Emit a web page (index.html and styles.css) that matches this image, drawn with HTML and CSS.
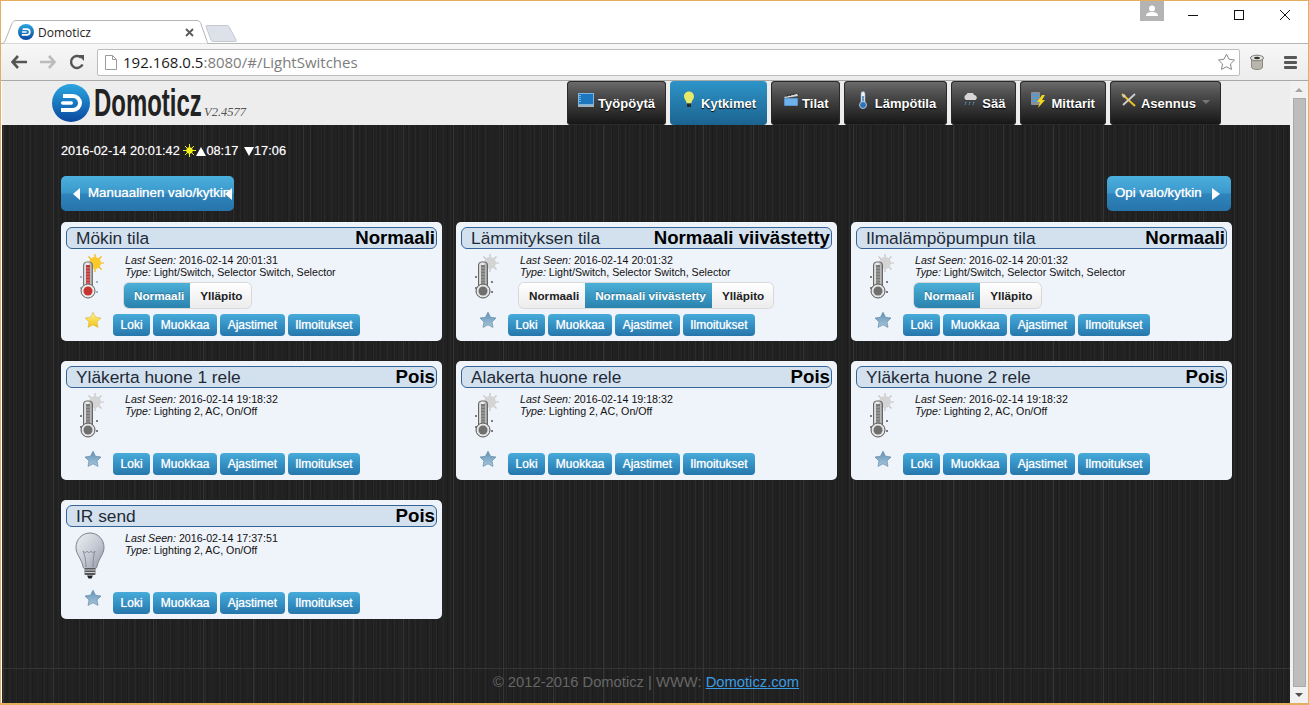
FILE: index.html
```html
<!DOCTYPE html>
<html lang="fi">
<head>
<meta charset="utf-8">
<title>Domoticz</title>
<link rel="stylesheet" href="styles.css">
</head>
<body>
<svg class="defs" width="0" height="0" aria-hidden="true">
  <defs>
    <linearGradient id="blueBall" x1="0" y1="0" x2="0" y2="1"><stop offset="0" stop-color="#2aa7e0"/><stop offset="1" stop-color="#0a48a0"/></linearGradient>
    <linearGradient id="tubeRed" x1="0" y1="0" x2="1" y2="0"><stop offset="0" stop-color="#c9c9c9"/><stop offset=".5" stop-color="#f4f4f4"/><stop offset="1" stop-color="#8a8a8a"/></linearGradient>
    <linearGradient id="glass" x1="0" y1="0" x2="1" y2="1"><stop offset="0" stop-color="#eef1f5"/><stop offset=".55" stop-color="#c3c9d2"/><stop offset="1" stop-color="#8f96a3"/></linearGradient>
    <linearGradient id="starGold" x1="0" y1="0" x2="0" y2="1"><stop offset="0" stop-color="#fff39a"/><stop offset="1" stop-color="#f2c20a"/></linearGradient>
    <linearGradient id="starBlue" x1="0" y1="0" x2="0" y2="1"><stop offset="0" stop-color="#5f93b8"/><stop offset="1" stop-color="#a9c6da"/></linearGradient>
    <symbol id="logoBall" viewBox="0 0 38 38">
      <circle cx="19" cy="19" r="19" fill="url(#blueBall)"/>
      <path d="M11 10h10a9 9 0 0 1 0 18H9v-4h12a5 5 0 0 0 0-10H11z" fill="#fff"/>
      <rect x="9" y="17.300" width="12" height="3.400" rx="1.700" fill="#fff"/>
    </symbol>
    <symbol id="thermoHot" viewBox="0 0 30 48">
      <g stroke="#f6b312" stroke-width="1.200"><path d="M20 0v18M11 9h18M13.500 2.500l13 13M26.500 2.500l-13 13"/></g>
      <circle cx="20" cy="9" r="6" fill="#fbc92a"/>
      <g fill="#7ba1c4"><circle cx="6" cy="23" r="1"/><circle cx="6" cy="34" r="1"/><circle cx="22" cy="28" r="1"/><circle cx="22" cy="38" r="1"/></g>
      <rect x="8.500" y="8" width="9" height="27" rx="3" fill="url(#tubeRed)" stroke="#777"/>
      <rect x="11" y="11" width="4" height="24" fill="#b93a3a"/>
      <g stroke="#e6a59c" stroke-width=".7"><path d="M11 14h4M11 17h4M11 20h4M11 23h4M11 26h4M11 29h4"/></g>
      <circle cx="13" cy="37" r="7" fill="#e9e9e9" stroke="#666"/>
      <circle cx="13" cy="37" r="4.500" fill="#c8332f"/>
    </symbol>
    <symbol id="thermoGrey" viewBox="0 0 30 48">
      <g stroke="#c4c4c4" stroke-width="1.200"><path d="M20 0v18M11 9h18M13.500 2.500l13 13M26.500 2.500l-13 13"/></g>
      <circle cx="20" cy="9" r="6" fill="#d4d4d4"/>
      <g fill="#555"><circle cx="6" cy="23" r="1"/><circle cx="6" cy="34" r="1"/><circle cx="22" cy="28" r="1"/><circle cx="22" cy="38" r="1"/></g>
      <rect x="8.500" y="8" width="9" height="27" rx="3" fill="url(#tubeRed)" stroke="#666"/>
      <rect x="11" y="11" width="4" height="24" fill="#7a7a7a"/>
      <g stroke="#bcbcbc" stroke-width=".7"><path d="M11 14h4M11 17h4M11 20h4M11 23h4M11 26h4M11 29h4"/></g>
      <circle cx="13" cy="37" r="7" fill="#e4e4e4" stroke="#555"/>
      <circle cx="13" cy="37" r="4.500" fill="#6f6f6f"/>
    </symbol>
    <symbol id="bulbOff" viewBox="0 0 30 48">
      <path d="M15 1C7 1 1 7.500 1 15.500c0 7 5.500 11 7 19 .3 1.500 1 2 2 2h10c1 0 1.700-.5 2-2 1.500-8 7-12 7-19C29 7.500 23 1 15 1z" fill="url(#glass)" stroke="#7d838c"/>
      <path d="M11 35c0-8-2-14-3-16 2 2 3 2 4 0 1 2 3 2 4 0 1 2 3 2 4 0-1 3-2 8-2 16" fill="none" stroke="#777f8a" stroke-width=".8"/>
      <rect x="9.500" y="36" width="11" height="7" rx="1" fill="#55585c"/>
      <path d="M9.500 38h11M9.500 40.500h11" stroke="#cfcfcf"/>
      <path d="M12 43.500h6l-1.500 3h-3z" fill="#222"/>
    </symbol>
    <symbol id="star" viewBox="0 0 18 18">
      <path d="M9 1.200l2.500 5 5.500.8-4 3.900 1 5.500L9 13.800l-5 2.600 1-5.500-4-3.900 5.500-.8z" stroke-linejoin="round"/>
    </symbol>
  </defs>
</svg>

<div class="window">
  <div class="tabstrip">
    <div class="tab">
      <svg class="tabshape" viewBox="0 0 206 24" width="206" height="24" aria-hidden="true"><path d="M0 23.500c1.500 0 2.500-1 3-2.500L10 3.500C10.600 1.700 12 .5 14 .5h181c2 0 3 1 3.800 3l6 17c.4 1.500.7 3 1.200 3" fill="#fff" stroke="#b5b5b5"/></svg>
      <svg class="favicon" width="16" height="16" aria-hidden="true"><use href="#logoBall"/></svg>
      <span class="tabtitle">Domoticz</span>
      <svg class="tabclose" width="9" height="9" viewBox="0 0 9 9" aria-hidden="true"><path d="M1 1l7 7M8 1L1 8" stroke="#5a5a5a" stroke-width="1.800"/></svg>
    </div>
    <svg class="newtab" width="33" height="17" viewBox="0 0 33 17" aria-hidden="true"><path d="M1 1.500c0-.6.400-1 1-1h20c1 0 1.800.5 2.200 1.500l7 13c.3.800 0 1.500-.9 1.500H8c-1 0-1.500-.5-2-1.500z" fill="#dde1e9" stroke="#c4c8d0"/></svg>
    <div class="winctl">
      <div class="profile"><svg width="14" height="12" viewBox="0 0 14 12" aria-hidden="true"><circle cx="7" cy="3.500" r="3" fill="#fff"/><path d="M1 11c0-3 3-4 6-4s6 1 6 4z" fill="#fff"/></svg></div>
      <svg class="wbtn" width="46" height="20" viewBox="0 0 46 20" aria-hidden="true"><path d="M18 14.500h10" stroke="#111"/></svg>
      <svg class="wbtn" width="46" height="20" viewBox="0 0 46 20" aria-hidden="true"><rect x="18.500" y="9.500" width="9" height="9" fill="none" stroke="#111"/></svg>
      <svg class="wbtn" width="46" height="20" viewBox="0 0 46 20" aria-hidden="true"><path d="M18 9l10 10M28 9L18 19" stroke="#111"/></svg>
    </div>
  </div>

  <div class="toolbar">
    <svg class="tbicon" width="16" height="14" viewBox="0 0 16 14" aria-hidden="true"><path d="M7 1L1.500 7 7 13M2 7h14" fill="none" stroke="#555" stroke-width="2.600"/></svg>
    <svg class="tbicon" width="16" height="14" viewBox="0 0 16 14" aria-hidden="true"><path d="M9 1l5.500 6L9 13M14 7H0" fill="none" stroke="#bcbcbc" stroke-width="2.600"/></svg>
    <svg class="tbicon" width="16" height="16" viewBox="0 0 16 16" aria-hidden="true"><path d="M13.500 10.500A6 6 0 1 1 12 3.500" fill="none" stroke="#555" stroke-width="2.400"/><path d="M9 1h6v6z" fill="#555"/></svg>
    <div class="omnibox">
      <svg class="pageicon" width="12" height="15" viewBox="0 0 12 15" aria-hidden="true"><path d="M.5.500h7l4 4v10H.5z" fill="#fff" stroke="#9a9a9a"/><path d="M7.500.500v4h4" fill="none" stroke="#9a9a9a"/></svg>
      <span class="url"><span class="host">192.168.0.5</span>:8080/#/LightSwitches</span>
      <svg class="bookmark" width="19" height="18" viewBox="0 0 18 18" aria-hidden="true"><path d="M9 1.200l2.500 5 5.500.8-4 3.900 1 5.500L9 13.800l-5 2.600 1-5.500-4-3.900 5.500-.8z" fill="#fff" stroke="#888"/></svg>
    </div>
    <svg class="ext" width="14" height="16" viewBox="0 0 14 16" aria-hidden="true"><path d="M1.500 4v9c0 1.500 2.500 2.500 5.500 2.500s5.500-1 5.500-2.500V4z" fill="#b8b6ad" stroke="#8a8a80"/><ellipse cx="7" cy="4" rx="6.500" ry="2.800" fill="#e8e8e0" stroke="#777"/><ellipse cx="7" cy="4" rx="3" ry="1.200" fill="#333"/></svg>
    <div class="menu"><i></i><i></i><i></i></div>
  </div>

  <div class="viewport">
    <div class="page">
      <header class="header">
        <a class="brand">
          <svg class="ball" width="38" height="38" aria-hidden="true"><use href="#logoBall"/></svg>
          <span class="wordmark">Domoticz</span>
          <span class="version">V2.4577</span>
        </a>
        <nav class="nav">
          <a class="navbtn"><svg class="navicon" width="16" height="14" viewBox="0 0 16 14" aria-hidden="true"><rect x=".5" y=".5" width="15" height="11" fill="#1d76c0" stroke="#7fb6dd"/><path d="M2 2v8" stroke="#cfe8fa" stroke-dasharray="1 1"/><rect y="12" width="16" height="2" fill="#9fb2c0"/></svg>Työpöytä</a>
          <a class="navbtn active"><svg class="navicon" width="16" height="17" viewBox="-2.500 0 16 17" aria-hidden="true"><path d="M5.500.5C2.500.5.500 2.700.500 5.500c0 2.500 2.300 4 2.800 7h4.400c.5-3 2.800-4.500 2.800-7C10.500 2.700 8.500.5 5.500.5z" fill="#e7e96b"/><rect x="3.500" y="12.500" width="4" height="3.500" fill="#2b2b2b"/></svg>Kytkimet</a>
          <a class="navbtn"><svg class="navicon" width="16" height="13" viewBox="-2 0 16 13" aria-hidden="true"><rect y="5" width="14" height="8" fill="#6fb1ea" stroke="#2d4e78" stroke-width=".6"/><path d="M0 4l13-3 1 2L1 5z" fill="#ddd"/><path d="M3 3.500l1-2M6 3l1-2M9 2l1-1.500" stroke="#222"/></svg>Tilat</a>
          <a class="navbtn"><svg class="navicon" width="16" height="18" viewBox="-4 0 16 18" aria-hidden="true"><rect x="2" y=".5" width="4" height="12" rx="2" fill="#eef3f8" stroke="#8aa8c4" stroke-width=".6"/><rect x="3.300" y="5" width="1.400" height="8" fill="#2e73ba"/><circle cx="4" cy="14" r="3.500" fill="#2e73ba" stroke="#cfe0ef" stroke-width=".8"/></svg>Lämpötila</a>
          <a class="navbtn"><svg class="navicon" width="16" height="13" viewBox="-1 0 16 13" aria-hidden="true"><path d="M3 7a3 3 0 0 1 .5-5.500A4 4 0 0 1 11 2a2.700 2.700 0 0 1 1.500 5z" fill="#d6d6d6"/><path d="M3 9l-1 3M7 9l-1 3M11 9l-1 3" stroke="#5db0ea" stroke-dasharray="1.500 1"/></svg>Sää</a>
          <a class="navbtn"><svg class="navicon" width="16" height="16" viewBox="0 0 16 16" aria-hidden="true"><rect width="9" height="13" rx="1" fill="#8a8f98"/><path d="M1 3h7M1 6h7M1 9h7" stroke="#4a9fe0" stroke-width="1.400"/><path d="M11 3l-5 7h3l-2 6 7-8h-3l3-5z" fill="#f3d81a"/></svg>Mittarit</a>
          <a class="navbtn"><svg class="navicon" width="16" height="14" viewBox="0 0 16 14" aria-hidden="true"><path d="M1 1l13 12" stroke="#f0c020" stroke-width="2"/><path d="M14 1L2 12" stroke="#cfcfcf" stroke-width="1.800"/><path d="M1 3l2-2 2 2-2 2z" fill="#cfcfcf"/></svg>Asennus<span class="caret"></span></a>
        </nav>
      </header>

      <main class="main">
        <p class="clock">2016-02-14 20:01:42
          <svg class="sun" width="13" height="13" viewBox="0 0 13 13" aria-hidden="true"><g stroke="#ecec1a"><path d="M6.500 0v13M0 6.500h13M2 2l9 9M11 2l-9 9"/></g><circle cx="6.500" cy="6.500" r="3.200" fill="#f4f01c"/></svg><span class="up"></span>08:17 <span class="down"></span>17:06
        </p>

        <div class="actionsbar">
          <a class="bigbtn manual"><span class="tri left"></span><span class="biglabel">Manuaalinen valo/kytkin</span><span class="tri left over"></span></a>
          <a class="bigbtn learn"><span class="biglabel">Opi valo/kytkin</span><span class="tri right"></span></a>
        </div>

        <section class="grid">
          <article class="card">
            <h2 class="title"><span>Mökin tila</span><strong>Normaali</strong></h2>
            <div class="body">
              <svg class="devicon" width="30" height="48" aria-hidden="true"><use href="#thermoHot"/></svg>
              <div class="details">
                <p><em>Last Seen:</em> 2016-02-14 20:01:31</p>
                <p><em>Type:</em> Light/Switch, Selector Switch, Selector</p>
                <div class="selector"><a class="on">Normaali</a><a>Ylläpito</a></div>
              </div>
            </div>
            <div class="actions">
              <svg class="fav gold" width="18" height="18" aria-hidden="true"><use href="#star"/></svg>
              <a class="btn">Loki</a><a class="btn">Muokkaa</a><a class="btn">Ajastimet</a><a class="btn">Ilmoitukset</a>
            </div>
          </article>

          <article class="card">
            <h2 class="title"><span>Lämmityksen tila</span><strong>Normaali viivästetty</strong></h2>
            <div class="body">
              <svg class="devicon" width="30" height="48" aria-hidden="true"><use href="#thermoGrey"/></svg>
              <div class="details">
                <p><em>Last Seen:</em> 2016-02-14 20:01:32</p>
                <p><em>Type:</em> Light/Switch, Selector Switch, Selector</p>
                <div class="selector"><a>Normaali</a><a class="on">Normaali viivästetty</a><a>Ylläpito</a></div>
              </div>
            </div>
            <div class="actions">
              <svg class="fav" width="18" height="18" aria-hidden="true"><use href="#star"/></svg>
              <a class="btn">Loki</a><a class="btn">Muokkaa</a><a class="btn">Ajastimet</a><a class="btn">Ilmoitukset</a>
            </div>
          </article>

          <article class="card">
            <h2 class="title"><span>Ilmalämpöpumpun tila</span><strong>Normaali</strong></h2>
            <div class="body">
              <svg class="devicon" width="30" height="48" aria-hidden="true"><use href="#thermoGrey"/></svg>
              <div class="details">
                <p><em>Last Seen:</em> 2016-02-14 20:01:32</p>
                <p><em>Type:</em> Light/Switch, Selector Switch, Selector</p>
                <div class="selector"><a class="on">Normaali</a><a>Ylläpito</a></div>
              </div>
            </div>
            <div class="actions">
              <svg class="fav" width="18" height="18" aria-hidden="true"><use href="#star"/></svg>
              <a class="btn">Loki</a><a class="btn">Muokkaa</a><a class="btn">Ajastimet</a><a class="btn">Ilmoitukset</a>
            </div>
          </article>

          <article class="card">
            <h2 class="title"><span>Yläkerta huone 1 rele</span><strong>Pois</strong></h2>
            <div class="body">
              <svg class="devicon" width="30" height="48" aria-hidden="true"><use href="#thermoGrey"/></svg>
              <div class="details">
                <p><em>Last Seen:</em> 2016-02-14 19:18:32</p>
                <p><em>Type:</em> Lighting 2, AC, On/Off</p>
              </div>
            </div>
            <div class="actions">
              <svg class="fav" width="18" height="18" aria-hidden="true"><use href="#star"/></svg>
              <a class="btn">Loki</a><a class="btn">Muokkaa</a><a class="btn">Ajastimet</a><a class="btn">Ilmoitukset</a>
            </div>
          </article>

          <article class="card">
            <h2 class="title"><span>Alakerta huone rele</span><strong>Pois</strong></h2>
            <div class="body">
              <svg class="devicon" width="30" height="48" aria-hidden="true"><use href="#thermoGrey"/></svg>
              <div class="details">
                <p><em>Last Seen:</em> 2016-02-14 19:18:32</p>
                <p><em>Type:</em> Lighting 2, AC, On/Off</p>
              </div>
            </div>
            <div class="actions">
              <svg class="fav" width="18" height="18" aria-hidden="true"><use href="#star"/></svg>
              <a class="btn">Loki</a><a class="btn">Muokkaa</a><a class="btn">Ajastimet</a><a class="btn">Ilmoitukset</a>
            </div>
          </article>

          <article class="card">
            <h2 class="title"><span>Yläkerta huone 2 rele</span><strong>Pois</strong></h2>
            <div class="body">
              <svg class="devicon" width="30" height="48" aria-hidden="true"><use href="#thermoGrey"/></svg>
              <div class="details">
                <p><em>Last Seen:</em> 2016-02-14 19:18:32</p>
                <p><em>Type:</em> Lighting 2, AC, On/Off</p>
              </div>
            </div>
            <div class="actions">
              <svg class="fav" width="18" height="18" aria-hidden="true"><use href="#star"/></svg>
              <a class="btn">Loki</a><a class="btn">Muokkaa</a><a class="btn">Ajastimet</a><a class="btn">Ilmoitukset</a>
            </div>
          </article>

          <article class="card">
            <h2 class="title"><span>IR send</span><strong>Pois</strong></h2>
            <div class="body">
              <svg class="devicon" width="30" height="48" aria-hidden="true"><use href="#bulbOff"/></svg>
              <div class="details">
                <p><em>Last Seen:</em> 2016-02-14 17:37:51</p>
                <p><em>Type:</em> Lighting 2, AC, On/Off</p>
              </div>
            </div>
            <div class="actions">
              <svg class="fav" width="18" height="18" aria-hidden="true"><use href="#star"/></svg>
              <a class="btn">Loki</a><a class="btn">Muokkaa</a><a class="btn">Ajastimet</a><a class="btn">Ilmoitukset</a>
            </div>
          </article>
        </section>
      </main>

      <footer class="footer">© 2012-2016 Domoticz | WWW: <a>Domoticz.com</a></footer>
    </div>

    <div class="scrollbar">
      <span class="arrow uparrow"></span>
      <span class="thumb"></span>
      <span class="arrow downarrow"></span>
    </div>
  </div>
</div>
</body>
</html>
```
FILE: styles.css
```css
* { box-sizing: border-box; }
html, body { margin: 0; padding: 0; height: 100%; overflow: hidden; }
body { font-family: "Liberation Sans", Arial, sans-serif; }
.defs { display: block; height: 0; }
p, h2 { margin: 0; }

.window {
  width: 1309px; height: 705px;
  display: flex; flex-direction: column;
  border: solid #e5ae5f; border-width: 1px 1px 2px 1px;
  background: #fff;
}

/* browser chrome */
.tabstrip { height: 43px; display: flex; align-items: flex-start; flex: none; padding-left: 1px; border-bottom: 1px solid #b5b5b5; }
.tab { position: relative; width: 206px; height: 24px; margin-top: 19px; display: flex; align-items: center; padding-left: 16px; z-index: 1; }
.tabshape { position: absolute; left: 0; top: 0; }
.favicon, .tabtitle, .tabclose { position: relative; }
.tabtitle { margin-left: 4px; font: 12px "Open Sans", sans-serif; color: #222; width: 147px; }
.tabclose { margin-left: 0; }
.newtab { margin-top: 24px; margin-left: -3px; }
.winctl { margin-left: auto; display: flex; align-items: flex-start; }
.profile { width: 24px; height: 20px; background: #b4b4b4; display: flex; align-items: center; justify-content: center; margin-right: 6px; }
.wbtn { display: block; }

.toolbar { height: 37px; flex: none; display: flex; align-items: center; padding: 0 6px 0 10px; background: linear-gradient(#f7f7f7, #ececec); border-bottom: 1px solid #a9a9a9; }
.tbicon { margin-right: 13px; flex: none; }
.tbicon:nth-child(3) { margin-right: 12px; }
.omnibox { width: 1143px; height: 27px; flex: none; background: #fff; border: 1px solid #bdbdbd; border-radius: 2px; display: flex; align-items: center; padding: 0 3px 0 7px; }
.pageicon { flex: none; }
.url { margin-left: 6px; font: 15px "Open Sans", sans-serif; color: #7d7d7d; }
.host { color: #1a1a1a; }
.bookmark { margin-left: auto; }
.ext { margin-left: 10px; flex: none; }
.menu { margin-left: 20px; width: 13px; display: flex; flex-direction: column; gap: 2px; flex: none; }
.menu i { display: block; height: 3px; background: #585858; border-radius: 1px; }

/* page */
.viewport { flex: 1; min-height: 0; display: flex; }
.page { width: 1288px; flex: none; display: flex; flex-direction: column; min-height: 0; margin-left: 1px; }
.header { height: 44px; flex: none; background: #ededed; display: flex; justify-content: space-between; padding: 0 69px 0 50px; }
.brand { display: flex; align-items: center; }
.ball { flex: none; }
.wordmark { width: 108px; margin-left: 4px; font: bold 38px "Liberation Sans", sans-serif; color: #222; line-height: 38px; white-space: nowrap; transform: scaleX(.63); transform-origin: left center; }
.version { margin: 18px 0 0 2px; font: italic 12.5px "Liberation Serif", serif; color: #555; }
.nav { display: flex; gap: 4px; }
.navbtn { display: flex; align-items: center; height: 44px; padding: 0 11px; border-radius: 4px; background: linear-gradient(#6d6d6d, #4d4d4d 30%, #151515); color: #fff; font: bold 13px "Liberation Sans", sans-serif; letter-spacing: .02px; text-shadow: 0 1px 1px #000; box-shadow: inset 0 0 0 1px #2a2a2a; }
.navbtn.active { background: linear-gradient(#2d94c8, #1c638f); box-shadow: none; }
.navicon { margin: -7px 4px 0 0; flex: none; }
.caret { margin: 0 0 3px 6px; border: 4px solid transparent; border-top: 4px solid #777; border-bottom: 0; }

.main {
  flex: 1; min-height: 0; padding: 0 0 0 59px;
  background-color: #212121;
  background-image:
    repeating-linear-gradient(90deg, transparent 0 1px, #343434 1px 2px, transparent 2px 50px),
    repeating-linear-gradient(90deg, rgba(255,255,255,.03) 0 1px, transparent 1px 7px),
    repeating-linear-gradient(90deg, rgba(255,255,255,.025) 0 1px, transparent 1px 11px),
    repeating-linear-gradient(90deg, rgba(0,0,0,.12) 0 1px, transparent 1px 5px);
}
.clock { height: 51px; padding-top: 17px; font-size: 12.8px; line-height: 17px; color: #fff; text-shadow: 0 0 1px rgba(255,255,255,.5); white-space: nowrap; }
.sun { vertical-align: -2px; }
.up, .down { display: inline-block; vertical-align: -1px; }
.up { border-left: 5px solid transparent; border-right: 5px solid transparent; border-bottom: 9px solid #fff; }
.down { border-left: 5.5px solid transparent; border-right: 5.5px solid transparent; border-top: 9px solid #fff; margin-left: 2px; }

.actionsbar { display: flex; justify-content: space-between; width: 1170px; height: 35px; }
.bigbtn { position: relative; display: flex; align-items: center; height: 35px; border-radius: 5px; background: linear-gradient(#4bb0de, #3b98cb 48%, #2f84bb 52%, #2674aa); color: #fff; font: 13.33px "Liberation Sans", sans-serif; text-shadow: 0 0 1px rgba(255,255,255,.8); }
.manual { width: 173px; padding-left: 12px; }
.learn { width: 124px; padding-left: 8px; }
.biglabel { white-space: nowrap; margin-top: -3px; }
.tri { flex: none; border: 6px solid transparent; }
.tri.left { border-left: 0; border-right: 7px solid #fff; margin-right: 8px; }
.tri.right { border-right: 0; border-left: 8px solid #fff; margin-left: 10px; }
.tri.over { position: absolute; right: 2px; top: 12px; margin: 0; }

.grid { display: grid; grid-template-columns: repeat(3, 381px); column-gap: 14px; row-gap: 20px; margin-top: 11px; }
.card { height: 119px; border-radius: 5px; background: #eff3fa; padding: 5px; display: flex; flex-direction: column; color: #111; }
.title { height: 22px; flex: none; display: flex; justify-content: space-between; align-items: center; padding: 0 1px 0 9px; border: 1px solid #356596; border-radius: 6px; background: #d3e1ef; font-weight: normal; font-size: 17.33px; color: #1f2a36; white-space: nowrap; }
.title span { margin-top: 1px; }
.title strong { font-size: 18.67px; color: #000; }
.body { flex: 1; min-height: 0; display: flex; padding: 4px 0 0 9px; }
.devicon { flex: none; margin-top: 1px; }
.details { margin-left: 20px; padding-top: 1px; font-size: 10.67px; line-height: 12px; color: #111; }
.details p { white-space: nowrap; }
.selector { display: inline-flex; margin: 5px 0 0 -1px; height: 25px; border-radius: 5px; box-shadow: 0 0 0 1px #d8d8d8; }
.selector a { display: flex; align-items: center; padding: 0 6px 0 10px; font: bold 11.73px "Liberation Sans", sans-serif; color: #222; background: linear-gradient(#fff, #ececec); }
.selector a:first-child { border-radius: 5px 0 0 5px; }
.selector a:last-child { border-radius: 0 5px 5px 0; padding-right: 9px; }
.selector a.on { color: #fff; background: linear-gradient(#4bb0d8, #2a82ae); text-shadow: 0 -1px 1px rgba(0,0,0,.3); }
.actions { height: 22px; flex: none; display: flex; gap: 3px; padding-left: 47px; position: relative; }
.fav { position: absolute; left: 18px; top: -3px; fill: url(#starBlue); stroke: #56809f; stroke-width: .6; }
.fav.gold { fill: url(#starGold); stroke: #d8b53a; }
.btn { height: 22px; display: flex; align-items: center; padding: 0 7.6px; border-radius: 4px; background: linear-gradient(#47abd9, #3591c4 50%, #2676ab); color: #fff; font: 12px "Liberation Sans", sans-serif; text-shadow: 0 0 1px rgba(255,255,255,.8); }

.footer {
  height: 35px; flex: none; text-align: center; padding-top: 5px; font-size: 14.75px; line-height: 17px; color: #666;
  background-color: #212121;
  border-top: 1px solid #353535;
  background-image:
    repeating-linear-gradient(90deg, transparent 0 1px, #343434 1px 2px, transparent 2px 50px),
    repeating-linear-gradient(90deg, rgba(255,255,255,.03) 0 1px, transparent 1px 7px),
    repeating-linear-gradient(90deg, rgba(0,0,0,.12) 0 1px, transparent 1px 5px);
}
.footer a { color: #3b9be0; text-decoration: underline; }

.scrollbar { flex: 1; background: #f1f1f1; display: flex; flex-direction: column; align-items: center; padding: 7px 0 6px 0; }
.arrow { flex: none; border: 4px solid transparent; }
.uparrow { border-top: 0; border-bottom: 4px solid #a3a3a3; }
.downarrow { border-bottom: 0; border-top: 4px solid #505050; }
.thumb { flex: 1; width: 13px; margin: 6px 0; background: #bdbdbd; border: 1px solid #aaa; }
```
